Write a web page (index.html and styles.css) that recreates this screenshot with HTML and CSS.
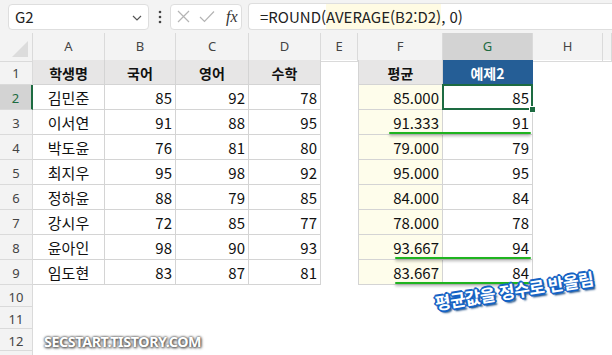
FILE: index.html
```html
<!DOCTYPE html>
<html lang="ko">

<head>
    <meta charset="UTF-8">
    <meta name="viewport" content="width=device-width, initial-scale=1.0">
    <title>ROUND 예제</title>
    <link rel="stylesheet" href="styles.css">
</head>

<body>
    <div class="app">
        <div class="toolbar">
            <div class="name-box">
                <span>G2</span>
                <svg class="chevron" width="10" height="6" viewBox="0 0 10 6">
                    <path d="M1 1 L5 5 L9 1" fill="none" stroke="#555" stroke-width="1.2" />
                </svg>
            </div>
            <svg class="dots" width="4" height="14" viewBox="0 0 4 14">
                <circle cx="2" cy="2" r="1.3" fill="#444" />
                <circle cx="2" cy="7" r="1.3" fill="#444" />
                <circle cx="2" cy="12" r="1.3" fill="#444" />
            </svg>
            <div class="fx-box">
                <svg width="13" height="13" viewBox="0 0 13 13">
                    <path d="M1 1 L12 12 M12 1 L1 12" stroke="#b4b4b4" stroke-width="1.2" />
                </svg>
                <svg width="16" height="13" viewBox="0 0 16 13">
                    <path d="M1 7 L5.5 11.5 L15 1.5" fill="none" stroke="#b4b4b4" stroke-width="1.2" />
                </svg>
                <span class="fx">fx</span>
            </div>
            <div class="formula">=ROUND(<span class="hl">AVERAGE(B2:D2)</span>, 0)</div>
        </div>

        <div class="sheet">
            <div class="row head">
                <div class="corner"></div>
                <div class="col-h">A</div>
                <div class="col-h">B</div>
                <div class="col-h">C</div>
                <div class="col-h">D</div>
                <div class="col-h">E</div>
                <div class="col-h">F</div>
                <div class="col-h sel">G</div>
                <div class="col-h">H</div>
                <div class="col-h"></div>
            </div>
            <div class="row">
                <div class="row-h">1</div>
                <div class="c th">학생명</div>
                <div class="c th">국어</div>
                <div class="c th">영어</div>
                <div class="c th">수학</div>
                <div></div>
                <div class="c th first">평균</div>
                <div class="c th blue">예제2</div>
                <div></div>
                <div></div>
            </div>
            <div class="row">
                <div class="row-h sel">2</div>
                <div class="c name">김민준</div>
                <div class="c">85</div>
                <div class="c">92</div>
                <div class="c">78</div>
                <div></div>
                <div class="c first avg">85.000</div>
                <div class="c active">85</div>
                <div></div>
                <div></div>
            </div>
            <div class="row">
                <div class="row-h">3</div>
                <div class="c name">이서연</div>
                <div class="c">91</div>
                <div class="c">88</div>
                <div class="c">95</div>
                <div></div>
                <div class="c first avg">91.333</div>
                <div class="c">91</div>
                <div></div>
                <div></div>
            </div>
            <div class="row">
                <div class="row-h">4</div>
                <div class="c name">박도윤</div>
                <div class="c">76</div>
                <div class="c">81</div>
                <div class="c">80</div>
                <div></div>
                <div class="c first avg">79.000</div>
                <div class="c">79</div>
                <div></div>
                <div></div>
            </div>
            <div class="row">
                <div class="row-h">5</div>
                <div class="c name">최지우</div>
                <div class="c">95</div>
                <div class="c">98</div>
                <div class="c">92</div>
                <div></div>
                <div class="c first avg">95.000</div>
                <div class="c">95</div>
                <div></div>
                <div></div>
            </div>
            <div class="row">
                <div class="row-h">6</div>
                <div class="c name">정하윤</div>
                <div class="c">88</div>
                <div class="c">79</div>
                <div class="c">85</div>
                <div></div>
                <div class="c first avg">84.000</div>
                <div class="c">84</div>
                <div></div>
                <div></div>
            </div>
            <div class="row">
                <div class="row-h">7</div>
                <div class="c name">강시우</div>
                <div class="c">72</div>
                <div class="c">85</div>
                <div class="c">77</div>
                <div></div>
                <div class="c first avg">78.000</div>
                <div class="c">78</div>
                <div></div>
                <div></div>
            </div>
            <div class="row">
                <div class="row-h">8</div>
                <div class="c name">윤아인</div>
                <div class="c">98</div>
                <div class="c">90</div>
                <div class="c">93</div>
                <div></div>
                <div class="c first avg">93.667</div>
                <div class="c">94</div>
                <div></div>
                <div></div>
            </div>
            <div class="row">
                <div class="row-h">9</div>
                <div class="c name">임도현</div>
                <div class="c">83</div>
                <div class="c">87</div>
                <div class="c">81</div>
                <div></div>
                <div class="c first avg">83.667</div>
                <div class="c">84</div>
                <div></div>
                <div></div>
            </div>
            <div class="row short">
                <div class="row-h">10</div>
            </div>
            <div class="row short">
                <div class="row-h">11</div>
            </div>
            <div class="row short">
                <div class="row-h">12</div>
            </div>
            <div class="row short">
                <div class="row-h"></div>
            </div>
        </div>

        <!-- hand-drawn marks over the sheet -->
        <div class="mark mark-3"></div>
        <div class="mark mark-8"></div>
        <div class="mark mark-9"></div>
        <div class="note">평균값을 정수로 반올림</div>
        <div class="watermark">SECSTART.TISTORY.COM</div>
    </div>
</body>

</html>
```

FILE: styles.css
```css
body {
    margin: 0;
    background: #ffffff;
    font-family: "Noto Sans CJK KR", "Noto Sans", sans-serif;
}

.app {
    position: relative;
    width: 612px;
    height: 355px;
    overflow: hidden;
}

/* formula bar */
.toolbar {
    height: 33px;
    background: #f3f3f3;
    display: flex;
    align-items: center;
    padding-left: 8px;
    box-sizing: border-box;
}

.name-box {
    width: 141px;
    height: 26px;
    background: #ffffff;
    border: 1px solid #dedede;
    border-radius: 4px;
    box-sizing: border-box;
    display: flex;
    align-items: center;
    justify-content: space-between;
    padding: 0 6px 0 6px;
    font-size: 15px;
    color: #222;
}

.chevron {
    margin-top: 2px;
}

.dots {
    margin-left: 9px;
}

.fx-box {
    margin-left: 8px;
    width: 72px;
    height: 26px;
    background: #ffffff;
    border: 1px solid #dedede;
    border-radius: 4px;
    box-sizing: border-box;
    display: flex;
    align-items: center;
    gap: 9px;
    padding-left: 6px;
}

.fx {
    font-family: "Liberation Serif", serif;
    font-style: italic;
    font-size: 16px;
    color: #333;
    margin-left: 2px;
}

.formula {
    margin-left: 6px;
    flex: 1;
    height: 27px;
    background: #ffffff;
    border-top: 1px solid #dedede;
    border-bottom: 1px solid #dedede;
    border-left: 1px solid #dedede;
    border-radius: 4px 0 0 4px;
    box-sizing: border-box;
    display: flex;
    align-items: stretch;
    padding-left: 11px;
    font-size: 15px;
    line-height: 25px;
    color: #222;
}

.hl {
    background: #fffbe3;
}

/* sheet grid */
.row {
    display: grid;
    grid-template-columns: 33px 72px 71px 73px 72px 37px 85px 90px 70px 1fr;
    height: 25px;
}

.row.head {
    height: 27px;
    background: #f3f3f3;
}

.row.short {
    height: 22px;
}

.corner {
    position: relative;
    border-right: 1px solid #dadada;
    border-bottom: 1px solid #dadada;
}

.corner::after {
    content: "";
    position: absolute;
    right: 4px;
    bottom: 4px;
    border-left: 16px solid transparent;
    border-bottom: 16px solid #dcdcdc;
}

.col-h {
    border-right: 1px solid #dadada;
    border-bottom: 1px solid #dadada;
    font-family: "Noto Sans", sans-serif;
    font-size: 13px;
    color: #444;
    text-align: center;
    line-height: 27px;
}

.col-h.sel {
    background: #d3d3d3;
    color: #1d6b41;
    border-bottom: 2px solid #1d6b41;
}

.row-h {
    background: #f3f3f3;
    border-right: 1px solid #dadada;
    border-bottom: 1px solid #dadada;
    font-family: "Noto Sans", sans-serif;
    font-size: 13px;
    color: #444;
    display: flex;
    align-items: center;
    justify-content: center;
    padding-top: 2px;
    box-sizing: border-box;
}

.row-h.sel {
    background: #d3d3d3;
    color: #1d6b41;
    border-right: 2px solid #1d6b41;
}

.c {
    border-right: 1px solid #d4d4d4;
    border-bottom: 1px solid #d4d4d4;
    display: flex;
    align-items: center;
    justify-content: flex-end;
    padding: 1px 3px 0 0;
    font-size: 15px;
    color: #111;
}

.c.first {
    border-left: 1px solid #d4d4d4;
}

.c.name {
    justify-content: center;
    padding-right: 0;
}

.c.th {
    background: #e7e6e6;
    justify-content: center;
    padding-right: 0;
    font-weight: bold;
    font-size: 14px;
}

.c.blue {
    background: #255e96;
    color: #ffffff;
    border-right-color: #255e96;
}

.c.avg {
    background: #fefdeb;
}

.c.active {
    position: relative;
}

.c.active::after {
    content: "";
    position: absolute;
    left: -1px;
    top: -1px;
    right: -1px;
    bottom: -1px;
    border: 2px solid #1d6b41;
}

.c.active::before {
    content: "";
    position: absolute;
    right: -4px;
    bottom: -4px;
    width: 5px;
    height: 5px;
    background: #1d6b41;
    border: 1px solid #ffffff;
    z-index: 1;
}

/* green underline marks */
.mark {
    position: absolute;
    height: 2px;
    background: #1fb41f;
    border-radius: 1px;
    box-shadow: 0 2px 3px rgba(0, 0, 0, 0.35);
}

.mark-3 {
    left: 389px;
    top: 132px;
    width: 142px;
}

.mark-8 {
    left: 395px;
    top: 257px;
    width: 136px;
}

.mark-9 {
    left: 395px;
    top: 282px;
    width: 137px;
}

.note {
    position: absolute;
    left: 435px;
    top: 290px;
    transform: rotate(-9deg);
    transform-origin: left center;
    font-size: 17px;
    font-weight: bold;
    letter-spacing: -0.5px;
    color: #ffffff;
    white-space: nowrap;
    text-shadow: -1px -1px 0 #1462c4, 1px -1px 0 #1462c4, -1px 1px 0 #1462c4, 1px 1px 0 #1462c4,
        0 -2px 0 #1462c4, 0 2px 0 #1462c4, -2px 0 0 #1462c4, 2px 0 0 #1462c4,
        2px 3px 2px #0a3d7a;
}

.watermark {
    position: absolute;
    left: 44px;
    top: 331px;
    font-family: "Noto Sans", sans-serif;
    font-size: 15px;
    font-weight: bold;
    color: #ffffff;
    letter-spacing: -0.4px;
    transform: scaleX(0.95);
    transform-origin: left center;
    text-shadow: 0 0 2px #555, 0 0 3px #666, 1px 1px 3px #444;
}
```
